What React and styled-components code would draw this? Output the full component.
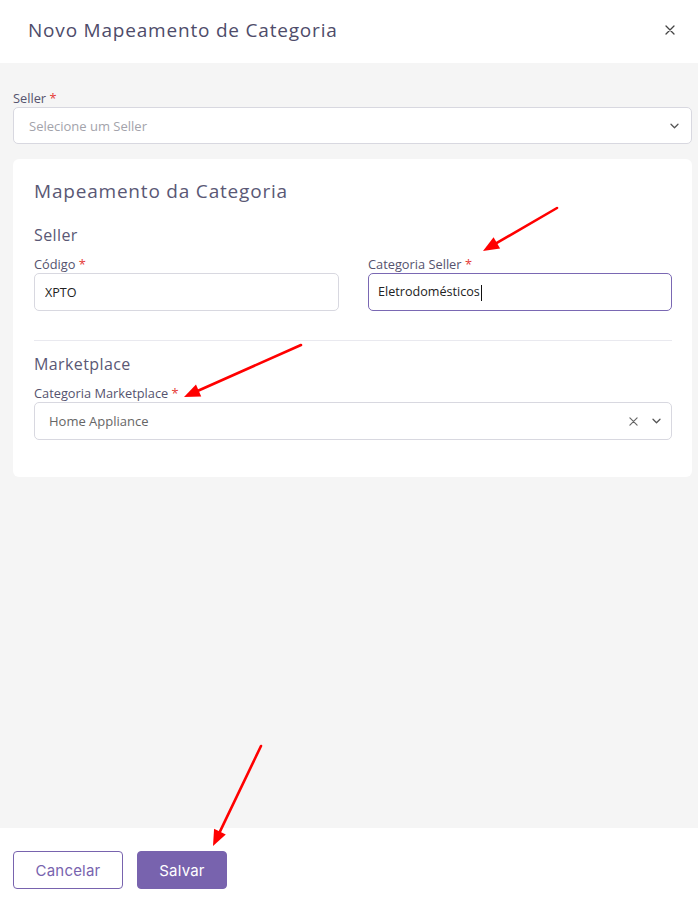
import React from "react";
import styled, { createGlobalStyle } from "styled-components";

const Global = createGlobalStyle`
  html, body { margin: 0; padding: 0; background: #fff; }
  * { box-sizing: border-box; }
`;

const Modal = styled.div`
  position: relative;
  width: 698px;
  height: 907px;
  display: flex;
  flex-direction: column;
  font-family: "Open Sans", sans-serif;
  color: #5a5875;
`;

const Header = styled.header`
  height: 63px;
  flex: none;
  display: flex;
  align-items: center;
  justify-content: space-between;
  padding: 0 21px 3px 28px;
  background: #fff;
`;

const Title = styled.h1`
  margin: 0;
  font-family: "Open Sans", sans-serif;
  font-weight: 400;
  font-size: 19px;
  line-height: 26px;
  letter-spacing: 0.8px;
  color: #4e4c6a;
`;

const CloseBtn = styled.button`
  border: 0;
  background: none;
  padding: 0;
  width: 14px;
  height: 14px;
  display: flex;
  align-items: center;
  justify-content: center;
`;

const Body = styled.main`
  flex: 1;
  background: #f5f5f5;
  padding: 26px 6px 0 13px;
  display: flex;
  flex-direction: column;
  gap: 15px;
`;

const Field = styled.div`
  display: flex;
  flex-direction: column;
  min-width: 0;
`;

const Label = styled.label`
  font-size: 12.8px;
  line-height: 18px;
  color: #55536e;
  span { color: #e53935; }
`;

const Control = styled.div`
  height: ${(p) => p.$h || 38}px;
  border: 1px solid ${(p) => (p.$focused ? "#7a68b3" : "#d8d8e0")};
  border-radius: 5px;
  background: #fff;
  display: flex;
  align-items: center;
  padding: 0 ${(p) => p.$pr || 10}px 0 ${(p) => p.$pl || 14}px;
  font-size: ${(p) => p.$fs || 12.6}px;
  color: ${(p) => p.$color || "#222"};
`;

const Value = styled.div`
  flex: 1;
  white-space: nowrap;
  overflow: hidden;
`;

const Caret = styled.span`
  display: inline-block;
  width: 1px;
  height: 16px;
  background: #111;
  vertical-align: middle;
  margin-left: 1px;
`;

const Icons = styled.div`
  display: flex;
  align-items: center;
  gap: 14px;
`;

const Card = styled.section`
  background: #fff;
  border-radius: 6px;
  padding: 19px 20px 37px 21px;
  display: flex;
  flex-direction: column;
`;

const CardTitle = styled.h2`
  margin: 0 0 20px;
  font-weight: 400;
  font-size: 19px;
  line-height: 26px;
  letter-spacing: 0.8px;
  color: #5a5875;
`;

const SubTitle = styled.h3`
  margin: 0 0 9px;
  font-weight: 400;
  font-size: 16px;
  line-height: 22px;
  letter-spacing: 0.4px;
  color: #5a5875;
`;

const Row = styled.div`
  display: grid;
  grid-template-columns: 305px 304px;
  column-gap: 29px;
`;

const Divider = styled.hr`
  border: 0;
  border-top: 1px solid #e9e9ef;
  margin: 29px 0 12px;
`;

const Footer = styled.footer`
  height: 79px;
  flex: none;
  background: #fff;
  display: flex;
  align-items: flex-start;
  gap: 14px;
  padding: 23px 13px 0;
`;

const Button = styled.button`
  height: 38px;
  width: ${(p) => p.$w}px;
  border-radius: 4px;
  font-family: Inter, sans-serif;
  font-size: 15px;
  font-weight: 400;
  letter-spacing: 0.2px;
  cursor: pointer;
  border: 1px solid #7863ae;
  background: ${(p) => (p.$primary ? "#7863ae" : "#fff")};
  color: ${(p) => (p.$primary ? "#fff" : "#7863ae")};
`;

const Overlay = styled.svg`
  position: absolute;
  left: 0;
  top: 0;
  width: 698px;
  height: 907px;
  pointer-events: none;
`;

const Chevron = () => (
  <svg width="9" height="6" viewBox="0 0 9 6" fill="none">
    <path d="M1 1.2l3.5 3.5 3.5-3.5" stroke="#555" strokeWidth="1.3" strokeLinecap="round" strokeLinejoin="round" />
  </svg>
);

const XIcon = ({ s = 10, c = "#555" }) => (
  <svg width={s} height={s} viewBox="0 0 10 10" fill="none">
    <path d="M1 1l8 8M9 1l-8 8" stroke={c} strokeWidth="1.3" strokeLinecap="round" />
  </svg>
);

const Arrow = ({ x1, y1, x2, y2 }) => {
  const a = Math.atan2(y2 - y1, x2 - x1);
  const L = 16, W = 6.5;
  const bx = x2 - L * Math.cos(a), by = y2 - L * Math.sin(a);
  const px = -Math.sin(a) * W, py = Math.cos(a) * W;
  return (
    <g>
      <line x1={x1} y1={y1} x2={bx} y2={by} stroke="#f00" strokeWidth="2.6" strokeLinecap="round" />
      <polygon points={`${x2},${y2} ${bx + px},${by + py} ${bx - px},${by - py}`} fill="#f00" />
    </g>
  );
};

export default function App() {
  return (
    <>
      <Global />
      <Modal>
        <Header>
          <Title>Novo Mapeamento de Categoria</Title>
          <CloseBtn aria-label="Fechar"><XIcon s={10} c="#444" /></CloseBtn>
        </Header>
        <Body>
          <Field>
            <Label>Seller <span>*</span></Label>
            <Control $h={37} $color="#a3a3ab" $pl={15} $pr={12} $fs={13}>
              <Value>Selecione um Seller</Value>
              <Chevron />
            </Control>
          </Field>
          <Card>
            <CardTitle>Mapeamento da Categoria</CardTitle>
            <SubTitle>Seller</SubTitle>
            <Row>
              <Field>
                <Label>Código <span>*</span></Label>
                <Control $pl={10}><Value>XPTO</Value></Control>
              </Field>
              <Field>
                <Label>Categoria Seller <span>*</span></Label>
                <Control $focused $pl={9}><Value>Eletrodomésticos<Caret /></Value></Control>
              </Field>
            </Row>
            <Divider />
            <SubTitle>Marketplace</SubTitle>
            <Field>
              <Label>Categoria Marketplace <span>*</span></Label>
              <Control $color="#666" $pl={14} $fs={13}>
                <Value>Home Appliance</Value>
                <Icons>
                  <XIcon s={9} c="#666" />
                  <Chevron />
                </Icons>
              </Control>
            </Field>
          </Card>
        </Body>
        <Footer>
          <Button $w={110}>Cancelar</Button>
          <Button $w={90} $primary>Salvar</Button>
        </Footer>
        <Overlay viewBox="0 0 698 907">
          <Arrow x1={557} y1={208} x2={483} y2={251} />
          <Arrow x1={301} y1={345} x2={184} y2={397} />
          <Arrow x1={261} y1={746} x2={213} y2={846} />
        </Overlay>
      </Modal>
    </>
  );
}
